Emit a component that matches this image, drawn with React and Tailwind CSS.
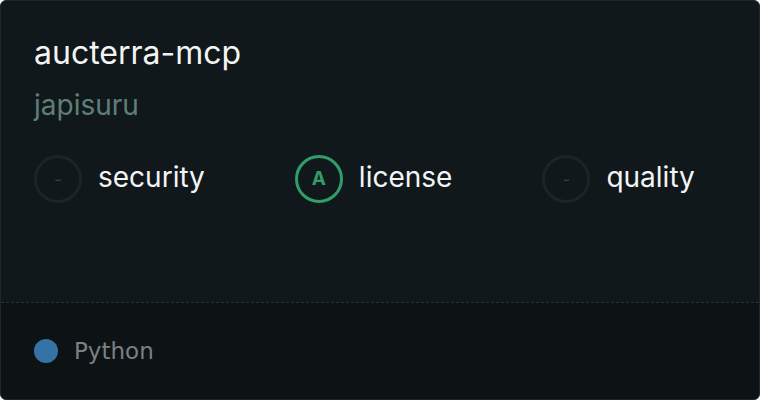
export default function App() {
  const Grade = ({ grade, label, active }) => (
    <div className="flex items-center gap-4">
      <div
        className={
          active
            ? "flex h-12 w-12 items-center justify-center rounded-full border-[3px] border-[#2f9e68] text-[19px] font-bold text-[#2f9e68]"
            : "flex h-12 w-12 items-center justify-center rounded-full border-[3px] border-[#1d2427] text-[16px] text-[#3a4144]"
        }
      >
        {grade}
      </div>
      <span className="pb-[5px] text-[28px] leading-none text-[#f4f4f4]">{label}</span>
    </div>
  );
  return (
    <div
      className="flex h-[400px] w-[760px] flex-col overflow-hidden rounded-[6px] border border-[#1f2629] bg-[#11181b]"
      style={{ fontFamily: "Inter, 'Noto Sans', sans-serif" }}
    >
      <div className="flex flex-1 flex-col px-[33px] pt-[33px]">
        <div className="text-[32px] leading-[38px] text-[#f4f4f4]">aucterra-mcp</div>
        <div className="mt-[17px] text-[28px] leading-[32px] text-[#5f7f76]">japisuru</div>
        <div className="mt-[34px] flex items-center gap-[90px]">
          <Grade grade="-" label="security" />
          <Grade grade="A" label="license" active />
          <Grade grade="-" label="quality" />
        </div>
      </div>
      <div className="flex h-[97px] items-center gap-4 border-t border-dashed border-[#2c3234] bg-[#0d1315] px-[33px]">
        <div className="h-6 w-6 rounded-full bg-[#3572a5]" />
        <span
          className="text-[23px] text-[#7b8083]"
          style={{ fontFamily: "'DejaVu Sans', sans-serif" }}
        >
          Python
        </span>
      </div>
    </div>
  );
}
